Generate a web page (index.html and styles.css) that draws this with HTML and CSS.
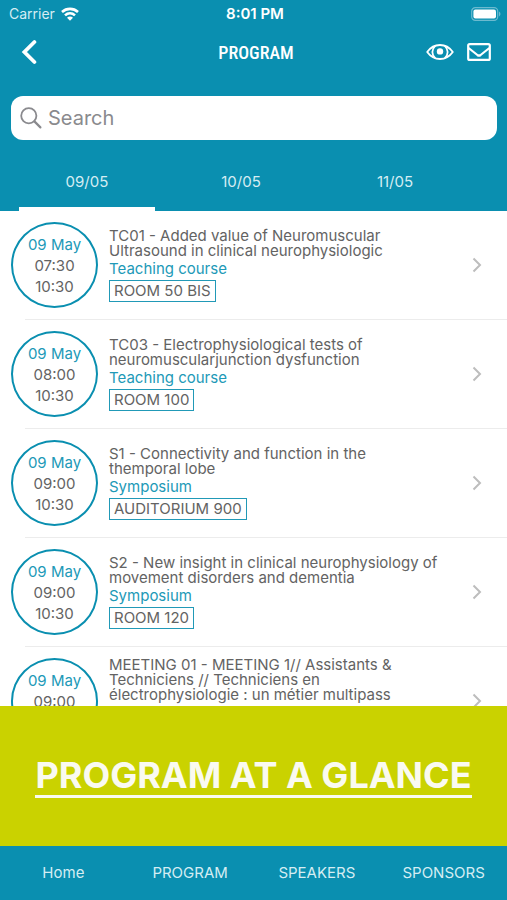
FILE: index.html
```html
<!DOCTYPE html>
<html lang="en">
  <head>
    <meta charset="UTF-8" />
    <meta name="viewport" content="width=device-width, initial-scale=1.0" />
    <title>Program</title>
    <link rel="stylesheet" href="styles.css">
  </head>
  <body>
    <header class="header">
      <div class="status-bar">
        <div class="carrier">
          <span>Carrier</span>
          <svg width="18" height="14" viewBox="0 0 18 14" fill="none" stroke="#fff" stroke-width="2.6">
            <path d="M1 5C5.6 .8 12.4 .8 17 5" />
            <path d="M4 8.4C6.9 5.7 11.1 5.7 14 8.4" />
            <path d="M9 13.8L6 10.8C7.7 9.2 10.3 9.2 12 10.8Z" fill="#fff" stroke="none" />
          </svg>
        </div>
        <span class="clock">8:01 PM</span>
        <div class="battery">
          <svg width="30" height="14" viewBox="0 0 30 14">
            <rect x=".7" y=".7" width="26" height="12.6" rx="3.6" fill="none" stroke="#6cbacf" stroke-width="1.2" />
            <rect x="2.4" y="2.4" width="22.6" height="9.2" rx="2" fill="#fff" />
            <path d="M28 4.6C29.9 5.4 29.9 8.6 28 9.4Z" fill="#6cbacf" />
          </svg>
        </div>
      </div>

      <div class="title-bar">
        <div class="title-side">
          <button class="icon-button" type="button" aria-label="Back">
            <svg width="16" height="26" viewBox="0 0 16 26" fill="none" stroke="#fff" stroke-width="3.8" stroke-linecap="round" stroke-linejoin="miter">
              <path d="M13.4 3L3.4 13L13.4 23" />
            </svg>
          </button>
        </div>
        <h1 class="title">PROGRAM</h1>
        <div class="title-side title-actions">
          <button class="icon-button" type="button" aria-label="Show">
            <svg width="28" height="18" viewBox="0 0 28 18" fill="none" stroke="#fff" stroke-width="1.8" stroke-linejoin="round">
              <path d="M1.2 9C4.5 4.4 9 2 14 2S23.5 4.400 26.8 9C23.5 13.6 19 16 14 16S4.5 13.6 1.2 9Z" />
              <path d="M9.2 2.8C5.4 6.5 5.4 11.5 9.2 15.2M18.8 2.8C22.6 6.500 22.6 11.5 18.8 15.2" />
              <circle cx="14" cy="8.4" r="3.2" fill="#fff" stroke="none" />
            </svg>
          </button>
          <button class="icon-button" type="button" aria-label="Messages">
            <svg width="24" height="18" viewBox="0 0 24 18" fill="none" stroke="#fff" stroke-width="2.2" stroke-linejoin="round">
              <rect x="1.2" y="1.1" width="21.6" height="15.8" rx="1.5" />
              <path d="M1.6 5L10.4 12Q12 13.2 13.6 12L22.4 5" />
            </svg>
          </button>
        </div>
      </div>

      <label class="search">
        <svg width="22" height="22" viewBox="0 0 22 22" fill="none" stroke="#8a8a8e" stroke-width="1.8" stroke-linecap="round">
          <circle cx="8.8" cy="8.8" r="7.6" />
          <path d="M14.4 14.4L20.4 20.4" stroke-width="2.2" />
        </svg>
        <input class="search-input" type="search" placeholder="Search" aria-label="Search" />
      </label>

      <div class="tabs">
        <button class="tab active" type="button">09/05</button>
        <button class="tab" type="button">10/05</button>
        <button class="tab" type="button">11/05</button>
      </div>
    </header>

    <main class="sessions">
      <a class="session" href="#">
        <div class="time">
          <span class="day">09 May</span>
          <span>07:30</span>
          <span>10:30</span>
        </div>
        <div class="details">
          <h2 class="name">TC01 - Added value of Neuromuscular<br />Ultrasound in clinical neurophysiologic</h2>
          <span class="type">Teaching course</span>
          <span class="room">ROOM 50 BIS</span>
        </div>
        <svg class="chevron" width="10" height="16" viewBox="0 0 10 16"><path d="M1.5 1.5L8 8L1.5 14.5" /></svg>
      </a>
      <a class="session" href="#">
        <div class="time">
          <span class="day">09 May</span>
          <span>08:00</span>
          <span>10:30</span>
        </div>
        <div class="details">
          <h2 class="name">TC03 - Electrophysiological tests of<br />neuromuscularjunction dysfunction</h2>
          <span class="type">Teaching course</span>
          <span class="room">ROOM 100</span>
        </div>
        <svg class="chevron" width="10" height="16" viewBox="0 0 10 16"><path d="M1.5 1.5L8 8L1.5 14.5" /></svg>
      </a>
      <a class="session" href="#">
        <div class="time">
          <span class="day">09 May</span>
          <span>09:00</span>
          <span>10:30</span>
        </div>
        <div class="details">
          <h2 class="name">S1 - Connectivity and function in the<br />themporal lobe</h2>
          <span class="type">Symposium</span>
          <span class="room">AUDITORIUM 900</span>
        </div>
        <svg class="chevron" width="10" height="16" viewBox="0 0 10 16"><path d="M1.5 1.5L8 8L1.5 14.5" /></svg>
      </a>
      <a class="session" href="#">
        <div class="time">
          <span class="day">09 May</span>
          <span>09:00</span>
          <span>10:30</span>
        </div>
        <div class="details">
          <h2 class="name">S2 - New insight in clinical neurophysiology of<br />movement disorders and dementia</h2>
          <span class="type">Symposium</span>
          <span class="room">ROOM 120</span>
        </div>
        <svg class="chevron" width="10" height="16" viewBox="0 0 10 16"><path d="M1.5 1.5L8 8L1.5 14.5" /></svg>
      </a>
      <a class="session" href="#">
        <div class="time partial">
          <span class="day">09 May</span>
          <span>09:00</span>
        </div>
        <div class="details partial">
          <h2 class="name">MEETING 01 - MEETING 1// Assistants &amp;<br />Techniciens // Techniciens en<br />électrophysiologie : un métier multipass</h2>
        </div>
        <svg class="chevron" width="10" height="16" viewBox="0 0 10 16"><path d="M1.5 1.5L8 8L1.5 14.5" /></svg>
      </a>
    </main>

    <a class="banner" href="#"><span class="banner-text">PROGRAM AT A GLANCE</span></a>

    <nav class="bottom-nav">
      <a href="#">Home</a>
      <a href="#">PROGRAM</a>
      <a href="#">SPEAKERS</a>
      <a href="#">SPONSORS</a>
    </nav>
  </body>
</html>
```
FILE: styles.css
```css
* {
  box-sizing: border-box;
}
body {
  margin: 0;
  height: 100vh;
  display: flex;
  flex-direction: column;
  overflow: hidden;
  background: #fff;
  color: #636363;
  font-family: Inter, sans-serif;
  font-size: 15px;
}
a {
  color: inherit;
  text-decoration: none;
}
button {
  padding: 0;
  border: 0;
  background: none;
  color: inherit;
  font: inherit;
}
svg {
  display: block;
}
.header {
  flex: none;
  background: #0a8fb0;
  color: #fff;
}
.status-bar {
  display: flex;
  align-items: center;
  height: 27px;
  padding: 0 6px 0 9px;
  font-size: 14px;
}
.carrier,
.battery {
  flex: 1;
  display: flex;
  align-items: center;
  gap: 6px;
}
.carrier {
  color: #d5edf3;
}
.battery {
  justify-content: flex-end;
}
.clock {
  font-size: 15px;
  font-weight: 600;
}
.title-bar {
  display: flex;
  align-items: center;
  height: 50px;
  padding: 0 16px 0 21px;
}
.title-side {
  flex: 1;
  display: flex;
}
.title-actions {
  justify-content: flex-end;
  gap: 13px;
}
.title {
  margin: 0;
  font-family: "Roboto Condensed", "Liberation Sans Narrow", Roboto, sans-serif;
  font-size: 18px;
  font-weight: 500;
}
.search {
  display: flex;
  align-items: center;
  gap: 6px;
  height: 44px;
  margin: 19px 10px 0 11px;
  padding: 0 9px;
  border-radius: 12px;
  background: #fff;
}
.search-input {
  flex: 1;
  min-width: 0;
  padding: 0;
  border: 0;
  outline: 0;
  background: none;
  color: #636363;
  font: 20px Inter, sans-serif;
}
.search-input::placeholder {
  color: #8a8a8e;
}
.tabs {
  display: flex;
  height: 71px;
  padding: 12px 35px 0 10px;
}
.tab {
  flex: 1;
  margin: 0 9px;
  padding-top: 4px;
  border-bottom: 4px solid transparent;
  color: #d5edf3;
}
.tab.active {
  border-color: #fff;
}
.sessions {
  flex: 1;
  min-height: 0;
  overflow: hidden;
}
.session {
  display: flex;
  align-items: center;
  height: 109px;
  padding: 0 25px 1px 11px;
  background: linear-gradient(#ececec, #ececec) 25px 100% / 100% 1px no-repeat;
}
.time {
  flex: none;
  display: flex;
  flex-direction: column;
  align-items: center;
  justify-content: center;
  width: 87px;
  height: 86px;
  margin-right: 11px;
  border: 2px solid #0a8fb0;
  border-radius: 50%;
  line-height: 21px;
}
.day,
.type {
  color: #2199b7;
}
.details {
  flex: 1;
  display: flex;
  flex-direction: column;
  align-items: flex-start;
}
/* last row runs under the banner, leave room for its missing lines */
.time.partial {
  padding-bottom: 21px;
}
.details.partial {
  padding-bottom: 44px;
}
.name {
  margin: 0;
  font-size: 15px;
  font-weight: 400;
  line-height: 15px;
}
.type {
  line-height: 22px;
}
.room {
  padding: 0 4px;
  border: 1px solid #2199b7;
  line-height: 20px;
}
.chevron {
  flex: none;
  fill: none;
  stroke: #bdbdbd;
  stroke-width: 2;
}
.banner {
  flex: none;
  display: flex;
  align-items: center;
  justify-content: center;
  height: 140px;
  background: #cad200;
  color: #fafaf0;
}
.banner-text {
  border-bottom: 3px solid #fafaf0;
  font-size: 36px;
  font-weight: 700;
  line-height: 40px;
}
.bottom-nav {
  flex: none;
  display: flex;
  align-items: center;
  height: 54px;
  padding-bottom: 2px;
  background: #0a8fb0;
  color: #d5edf3;
}
.bottom-nav a {
  flex: 1 1 0;
  text-align: center;
}
```
